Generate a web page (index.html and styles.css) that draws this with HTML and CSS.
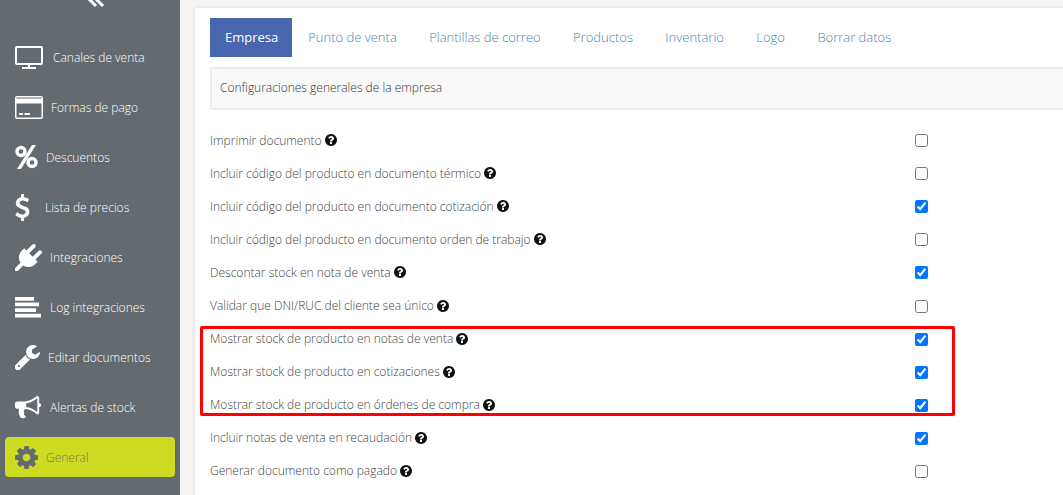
FILE: index.html
```html
<!DOCTYPE html>
<html lang="es">
<head>
    <meta charset="UTF-8">
    <meta name="viewport" content="width=device-width, initial-scale=1.0">
    <title>Configuración general</title>
    <link rel="stylesheet" href="styles.css">
</head>
<body>
    <svg class="sprites" xmlns="http://www.w3.org/2000/svg">
        <symbol id="i-help" viewBox="0 0 1536 1536"><path transform="translate(-128 -128)" d="M1024 1376v-192q0-14-9-23t-23-9h-192q-14 0-23 9t-9 23v192q0 14 9 23t23 9h192q14 0 23-9t9-23zm256-672q0-88-55.500-163t-138.500-116-170-41q-243 0-371 213-15 24 8 42l132 100q7 6 19 6 16 0 25-12 53-68 86-92 34-24 86-24 48 0 85.500 26t37.500 59q0 38-20 61t-68 45q-63 28-115.500 86.500t-52.500 125.500v36q0 14 9 23t23 9h192q14 0 23-9t9-23q0-19 21.500-49.500t54.500-49.500q32-18 49-28.500t46-35 44.500-48 28-60.500 12.500-81zm384 192q0 209-103 385.500t-279.500 279.500-385.500 103-385.500-103-279.500-279.500-103-385.500 103-385.500 279.500-279.500 385.500-103 385.500 103 279.500 279.500 103 385.500z"/></symbol>
    </svg>

    <div class="app">
        <aside class="sidebar">
            <div class="sidebar-toggle">
                <svg width="22" height="8" viewBox="0 0 22 8"><path d="M2-2 10 6M9-2 17 6" fill="none" stroke="#fff" stroke-width="3"/></svg>
            </div>
            <nav class="menu">
                <a class="menu-item">
                    <svg class="menu-icon icon-wide" width="28" height="23" viewBox="0 0 28 23"><path fill="#fff" d="M2 0h24a2 2 0 0 1 2 2v15a2 2 0 0 1-2 2H15v2h6v2H7v-2h6v-2H2a2 2 0 0 1-2-2V2a2 2 0 0 1 2-2zm0 2v15h24V2z"/></svg>
                    <span>Canales de venta</span>
                </a>
                <a class="menu-item">
                    <svg class="menu-icon" width="28" height="23" viewBox="0 0 28 23"><path fill="#fff" fill-rule="evenodd" d="M2 0h24a2 2 0 0 1 2 2v19a2 2 0 0 1-2 2H2a2 2 0 0 1-2-2V2a2 2 0 0 1 2-2zm-.500 7.500v14h25v-14zm0-6v.9h25v-.9zM4 17h4v2H4zm5.500 0H15v2H9.500z"/></svg>
                    <span>Formas de pago</span>
                </a>
                <a class="menu-item">
                    <svg class="menu-icon" width="23" height="24" viewBox="0 0 23 24"><g fill="none" stroke="#fff" stroke-width="3.400"><circle cx="6" cy="6.500" r="4"/><circle cx="17" cy="17.500" r="4"/></g><path fill="#fff" d="M17 0h4L6 24H2z"/></svg>
                    <span>Descuentos</span>
                </a>
                <a class="menu-item">
                    <svg class="menu-icon icon-usd" width="15" height="27" viewBox="400 0 1000 1792" preserveAspectRatio="none"><path fill="#fff" d="M1362 1185q0 153-99.500 263.500t-258.500 136.500v175q0 14-9 23t-23 9h-135q-13 0-22.500-9.500t-9.500-22.500v-175q-66-9-127.500-31t-101.500-44.500-74-48-46.500-37.500-17.500-18q-17-21-2-41l103-135q7-10 23-12 15-2 24 9l2 2q113 99 243 125 37 8 74 8 81 0 142.500-43t61.500-122q0-28-15-53t-33.500-42-58.500-37.500-66-32-80-32.500q-39-16-61.500-25t-61.500-26.500-62.500-31-56.500-35.500-53.500-42.500-43.500-49-35.500-58-21-66.500-8.500-78q0-138 98-242t255-134v-180q0-13 9.500-22.500t22.500-9.500h135q14 0 23 9t9 23v176q57 6 110.500 23t87 33.500 63.500 37.500 39 29 15 14q17 18 5 38l-81 146q-8 15-23 16-14 3-27-7-3-3-14.500-12t-39-26.500-58.500-32-74.500-26-85.500-11.500q-95 0-155 43t-60 111q0 26 8.500 48t29.500 41.500 39.500 33 56 31 60.500 27 70 27.500q53 20 81 31.500t76 35 75.500 42.500 62 50 53 63.500 31.500 76.500 13 94z"/></svg>
                    <span>Lista de precios</span>
                </a>
                <a class="menu-item">
                    <svg class="menu-icon" width="27" height="27" viewBox="0 0 1792 1792"><path fill="#fff" d="M1755 453q37 38 37 90.500t-37 90.500l-401 400 150 150-160 160q-163 163-389.500 186.500t-411.500-100.500l-362 362h-181v-181l362-362q-124-185-100.500-411.500t186.500-389.500l160-160 150 150 400-401q38-37 91-37t90 37 37 90.500-37 90.500l-400 401 234 234 401-400q38-37 91-37t90 37z"/></svg>
                    <span>Integraciones</span>
                </a>
                <a class="menu-item">
                    <svg class="menu-icon" width="27" height="21" viewBox="0 0 27 21"><path fill="#fff" d="M0 0h19v3.700H0zM0 5.600h24v3.700H0zM0 11.200h21v3.700H0zM0 16.800h26v3.700H0z"/></svg>
                    <span>Log integraciones</span>
                </a>
                <a class="menu-item">
                    <svg class="menu-icon" width="25" height="25" viewBox="128 128 1600 1600"><path fill="#fff" d="M448 1472q0-26-19-45t-45-19-45 19-19 45 19 45 45 19 45-19 19-45zm644-420l-682 682q-37 37-90 37-52 0-91-37l-106-108q-38-36-38-90 0-53 38-91l681-681q39 98 114.500 173.500t173.500 114.500zm634-435q0 39-23 106-47 134-164.500 217.500t-258.500 83.500q-185 0-316.500-131.500t-131.500-316.500 131.500-316.500 316.500-131.500q58 0 121.500 16.500t107.500 46.500q16 11 16 28t-16 28l-293 169v224l193 107q5-3 79-48.500t135.500-81 70.500-35.500q15 0 23.500 10t8.500 25z"/></svg>
                    <span>Editar documentos</span>
                </a>
                <a class="menu-item">
                    <svg class="menu-icon icon-horn" width="26" height="26" viewBox="0 128 1792 1536"><path fill="#fff" d="M1664 640q53 0 90.500 37.500t37.500 90.500-37.500 90.500-90.500 37.500v384q0 52-38 90t-90 38q-417-347-812-380-58 19-91 66t-31 100.500 40 92.500q-20 33-23 65.500t6 58 33.500 55 48 50 61.500 50.500q-29 58-111.500 83t-168.500 11.500-132-55.500q-7-23-29.500-87.500t-32-94.500-23-89-15-101 3.500-98.500 22-110.500h-122q-66 0-113-47t-47-113v-192q0-66 47-113t113-47h480q435 0 896-384 52 0 90 38t38 90v384zm-128 604v-954q-394 302-768 343v270q377 42 768 341z"/></svg>
                    <span>Alertas de stock</span>
                </a>
                <a class="menu-item active">
                    <svg class="menu-icon" width="23" height="23" viewBox="128 128 1536 1536"><path fill="#636a70" d="M1152 896q0-106-75-181t-181-75-181 75-75 181 75 181 181 75 181-75 75-181zm512-109v222q0 12-8 23t-20 13l-185 28q-19 54-39 91 35 50 107 138 10 12 10 25t-9 23q-27 37-99 108t-94 71q-12 0-26-9l-138-108q-44 23-91 38-16 136-29 186-7 28-36 28h-222q-14 0-24.500-8.500t-11.500-21.500l-28-184q-49-16-90-37l-141 107q-10 9-25 9-14 0-25-11-126-114-165-168-7-10-7-23 0-12 8-23 15-21 51-66.500t54-70.500q-27-50-41-99l-183-27q-13-2-21-12.500t-8-23.500v-222q0-12 8-23t19-13l186-28q14-46 39-92-40-57-107-138-10-12-10-24 0-10 9-23 26-36 98.500-107.500t94.500-71.500q13 0 26 10l138 107q44-23 91-38 16-136 29-186 7-28 36-28h222q14 0 24.500 8.500t11.500 21.500l28 184q49 16 90 37l142-107q9-9 24-9 13 0 25 10 129 119 165 170 7 8 7 22 0 12-8 23-15 21-51 66.500t-54 70.500q26 50 41 98l183 28q13 2 21 12.500t8 23.500z"/></svg>
                    <span>General</span>
                </a>
            </nav>
        </aside>

        <main class="content">
            <section class="card">
                <ul class="tabs">
                    <li class="tab active">Empresa</li>
                    <li class="tab">Punto de venta</li>
                    <li class="tab">Plantillas de correo</li>
                    <li class="tab">Productos</li>
                    <li class="tab">Inventario</li>
                    <li class="tab">Logo</li>
                    <li class="tab">Borrar datos</li>
                </ul>
                <div class="panel-title">Configuraciones generales de la empresa</div>
                <div class="settings">
                    <label class="row"><span class="row-label">Imprimir documento <svg class="help"><use href="#i-help"/></svg></span><input type="checkbox"></label>
                    <label class="row"><span class="row-label">Incluir código del producto en documento térmico <svg class="help"><use href="#i-help"/></svg></span><input type="checkbox"></label>
                    <label class="row"><span class="row-label">Incluir código del producto en documento cotización <svg class="help"><use href="#i-help"/></svg></span><input type="checkbox" checked></label>
                    <label class="row"><span class="row-label">Incluir código del producto en documento orden de trabajo <svg class="help"><use href="#i-help"/></svg></span><input type="checkbox"></label>
                    <label class="row"><span class="row-label">Descontar stock en nota de venta <svg class="help"><use href="#i-help"/></svg></span><input type="checkbox" checked></label>
                    <label class="row"><span class="row-label">Validar que DNI/RUC del cliente sea único <svg class="help"><use href="#i-help"/></svg></span><input type="checkbox"></label>
                    <div class="row-group">
                        <label class="row"><span class="row-label">Mostrar stock de producto en notas de venta <svg class="help"><use href="#i-help"/></svg></span><input type="checkbox" checked></label>
                        <label class="row"><span class="row-label">Mostrar stock de producto en cotizaciones <svg class="help"><use href="#i-help"/></svg></span><input type="checkbox" checked></label>
                        <label class="row"><span class="row-label">Mostrar stock de producto en órdenes de compra <svg class="help"><use href="#i-help"/></svg></span><input type="checkbox" checked></label>
                        <div class="red-box"></div>
                    </div>
                    <label class="row"><span class="row-label">Incluir notas de venta en recaudación <svg class="help"><use href="#i-help"/></svg></span><input type="checkbox" checked></label>
                    <label class="row"><span class="row-label">Generar documento como pagado <svg class="help"><use href="#i-help"/></svg></span><input type="checkbox"></label>
                </div>
            </section>
        </main>
    </div>
</body>
</html>
```

FILE: styles.css
```css
* {
    margin: 0;
    padding: 0;
    box-sizing: border-box;
}
html, body {
    height: 100%;
    overflow: hidden;
}
body {
    font-family: 'Open Sans', 'Liberation Sans', sans-serif;
    font-size: 12px;
    background: #f4f4f4;
    color: #444;
}
.sprites {
    display: none;
}
.app {
    display: flex;
    height: 495px;
}

/* barra lateral */
.sidebar {
    flex: none;
    width: 180px;
    background: #636a70;
    color: #fff;
    font-weight: 300;
}
.sidebar-toggle {
    height: 37px;
    padding-left: 86px;
    line-height: 0;
}
.menu {
    display: flex;
    flex-direction: column;
    gap: 10px;
    padding: 0 5px;
}
.menu-item {
    display: flex;
    align-items: center;
    height: 40px;
    padding-left: 10px;
    border-radius: 4px;
}
.menu-icon {
    flex: none;
    margin-right: 8px;
}
.menu-icon.icon-wide {
    margin-right: 10px;
}
.menu-icon.icon-usd {
    margin-right: 15px;
}
.menu-icon.icon-horn {
    margin-right: 9px;
}
.menu-item.active {
    background: #cddb22;
    color: #757c50;
}

/* contenido */
.content {
    flex: 1;
    overflow: hidden;
    padding: 8px 0 0 15px;
}
.card {
    width: 1000px;
    height: 600px;
    padding: 10px 15px;
    background: #fff;
    box-shadow: 0 0 4px rgba(0, 0, 0, 0.12);
}
.tabs {
    display: flex;
    list-style: none;
    font-size: 13px;
}
.tab {
    height: 39px;
    padding: 0 16.2px;
    line-height: 39px;
    color: #4a88ad;
    font-weight: 300;
}
.tab.active {
    width: 82px;
    padding: 0 15px;
    background: #4767b1;
    color: #fff;
    font-weight: 400;
}
.panel-title {
    height: 43px;
    margin-top: 10px;
    padding-left: 8px;
    line-height: 37px;
    background: #f9f9f9;
    border: 2px solid #eee;
    color: #333;
    font-weight: 300;
}
.settings {
    padding-top: 14px;
}
.row {
    display: flex;
    align-items: center;
    height: 33.1px;
}
.row-label {
    display: flex;
    align-items: center;
    gap: 3px;
    width: 705px;
    padding-bottom: 1px;
    font-weight: 300;
}
.row input {
    flex: none;
    width: 13px;
    height: 13px;
    margin: 0;
}
.help {
    width: 12px;
    height: 12px;
    fill: #111;
}
.row-group {
    position: relative;
}
.red-box {
    position: absolute;
    left: -10px;
    top: 3px;
    width: 755px;
    height: 90px;
    border: 3px solid #f00;
    border-radius: 2px;
    pointer-events: none;
}
```
